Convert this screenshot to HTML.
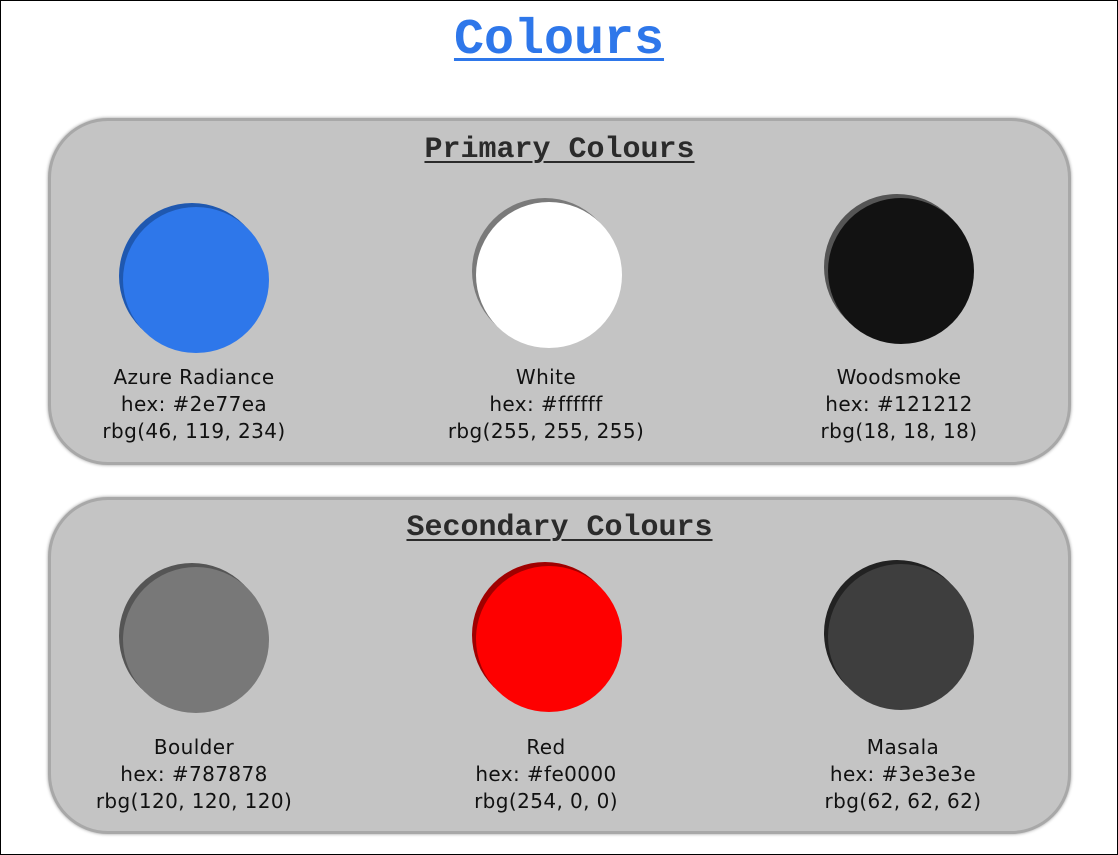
<!DOCTYPE html>
<html><head><style>
html,body{margin:0;padding:0;}
body{width:1118px;height:855px;position:relative;background:#fff;overflow:hidden;font-family:"Liberation Sans",sans-serif;}
.frame{position:absolute;left:0;top:0;width:1116px;height:853px;border:1px solid #000;}
h1{position:absolute;left:0;width:1118px;top:14px;margin:0;text-align:center;font-family:"Liberation Mono",monospace;font-weight:bold;font-size:50px;line-height:54px;color:#2e77ea;text-decoration:underline;text-decoration-thickness:3px;text-underline-offset:5px;}
.panel{position:absolute;left:48px;width:1017px;background:#c4c4c4;border:3px solid #a8a8a8;border-radius:60px;box-shadow:0 0 3px #999;}
.ph{position:absolute;left:0;width:100%;text-align:center;font-family:"Liberation Mono",monospace;font-weight:bold;font-size:30px;line-height:34px;color:#2b2b2b;text-decoration:underline;text-decoration-thickness:2px;text-underline-offset:4px;}
.c{position:absolute;width:146px;height:146px;border-radius:50%;}
.l{position:absolute;width:300px;text-align:center;font-family:"DejaVu Sans",sans-serif;font-size:20px;letter-spacing:0.4px;line-height:27px;color:#111;}
</style></head><body>
<div class="frame"></div>
<h1>Colours</h1>
<div class="panel" style="top:118px;height:341px;"><div class="ph" style="top:12px;">Primary Colours</div></div>
<div class="panel" style="top:497px;height:331px;"><div class="ph" style="top:11px;">Secondary Colours</div></div>

<div class="c" style="left:123px;top:207px;background:#2e77ea;box-shadow:-4px -4px 0 #1f58b0;"></div>
<div class="c" style="left:476px;top:202px;background:#fff;box-shadow:-4px -4px 0 #7a7a7a;"></div>
<div class="c" style="left:828px;top:198px;background:#121212;box-shadow:-4px -4px 0 #555;"></div>
<div class="c" style="left:123px;top:567px;background:#787878;box-shadow:-4px -4px 0 #555;"></div>
<div class="c" style="left:476px;top:566px;background:#fe0000;box-shadow:-4px -4px 0 #a00000;"></div>
<div class="c" style="left:828px;top:564px;background:#3e3e3e;box-shadow:-4px -4px 0 #222;"></div>

<div class="l" style="left:44px;top:364px;">Azure Radiance<br>hex: #2e77ea<br>rbg(46, 119, 234)</div>
<div class="l" style="left:396px;top:364px;">White<br>hex: #ffffff<br>rbg(255, 255, 255)</div>
<div class="l" style="left:749px;top:364px;">Woodsmoke<br>hex: #121212<br>rbg(18, 18, 18)</div>
<div class="l" style="left:44px;top:734px;">Boulder<br>hex: #787878<br>rbg(120, 120, 120)</div>
<div class="l" style="left:396px;top:734px;">Red<br>hex: #fe0000<br>rbg(254, 0, 0)</div>
<div class="l" style="left:753px;top:734px;">Masala<br>hex: #3e3e3e<br>rbg(62, 62, 62)</div>
</body></html>
